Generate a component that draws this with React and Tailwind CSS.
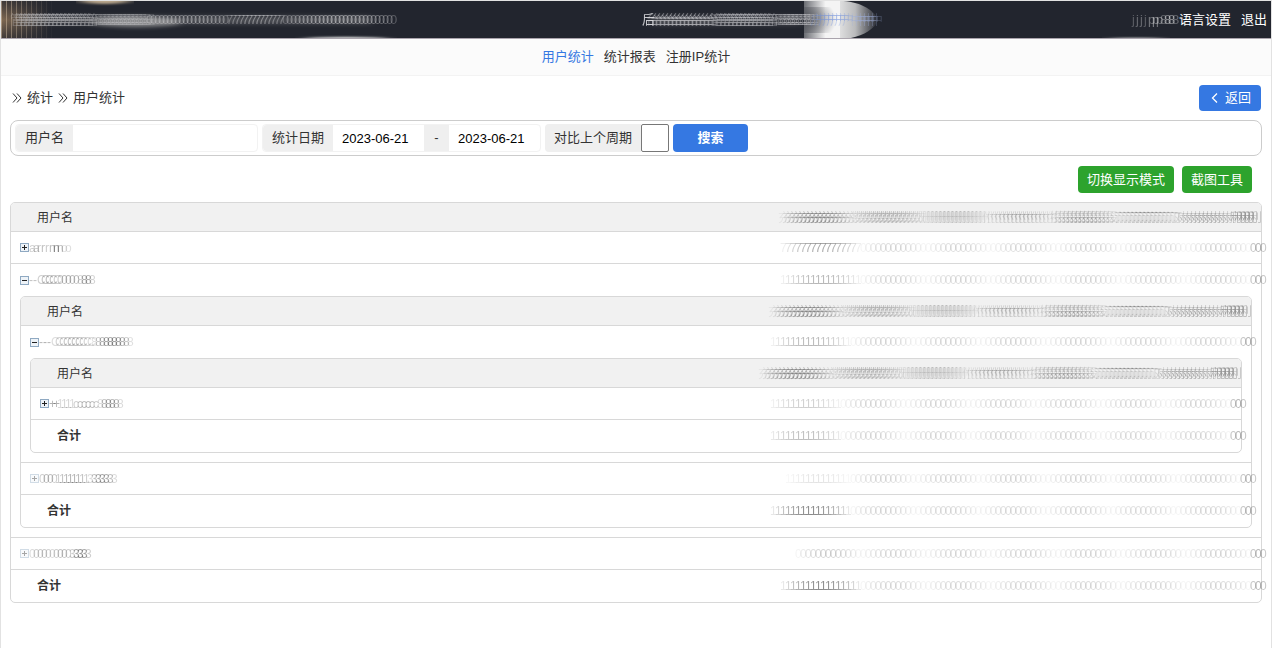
import { useState } from 'react';
import clsx from 'clsx';

// [glyph, copies, opacity at the ends, opacity in the middle]
const HEAD_RUNS = [
  ['充', 18, 0.05, 0.3],
  ['数', 17, 0.07, 0.17],
  ['删', 16, 0.06, 0.13],
  ['付', 17, 0.06, 0.17],
  ['投', 15, 0.1, 0.2],
  ['订', 16, 0.12, 0.22],
  ['对', 14, 0.14, 0.22],
  ['利', 6, 0.2, 0.3],
];

const zeros = (lead) => [
  lead,
  ['0', 13, 0.03, 0.16],
  ['0', 13, 0.03, 0.16],
  ['0', 13, 0.03, 0.16],
  ['0', 13, 0.03, 0.16],
  ['0', 13, 0.03, 0.15],
  ['0', 13, 0.03, 0.16],
  ['0', 3, 0.2, 0.34],
];

const INNER = {
  rows: [
    {
      name: [['+', 2, 0.3, 0.4], ['1', 4, 0.15, 0.2], ['c', 6, 0.2, 0.32], ['8', 6, 0.1, 0.4]],
      data: zeros(['1', 14, 0.05, 0.22]),
    },
  ],
  total: zeros(['1', 14, 0.08, 0.3]),
};

const MIDDLE = {
  rows: [
    {
      open: true,
      name: [['-', 3, 0.3, 0.4], ['C', 10, 0.15, 0.28], ['8', 10, 0.1, 0.45]],
      data: zeros(['1', 16, 0.04, 0.32]),
      child: INNER,
    },
    {
      name: [['0', 4, 0.2, 0.3], ['1', 8, 0.2, 0.35], ['3', 7, 0.1, 0.42]],
      data: zeros(['1', 13, 0.02, 0.12]),
    },
  ],
  total: zeros(['1', 16, 0.06, 0.55]),
};

const OUTER = {
  rows: [
    {
      name: [['a', 2, 0.2, 0.25], ['r', 3, 0.2, 0.3], ['n', 3, 0.2, 0.45], ['o', 2, 0.15, 0.15]],
      data: zeros(['7', 16, 0.04, 0.42]),
    },
    {
      open: true,
      name: [['-', 2, 0.3, 0.3], ['C', 5, 0.2, 0.3], ['0', 5, 0.25, 0.32], ['8', 4, 0.1, 0.4]],
      data: zeros(['1', 16, 0.04, 0.34]),
      child: MIDDLE,
    },
    {
      name: [['0', 6, 0.15, 0.25], ['0', 4, 0.2, 0.28], ['3', 5, 0.12, 0.5]],
      data: zeros(['0', 13, 0.03, 0.2]),
    },
  ],
  total: zeros(['1', 16, 0.06, 0.55]),
};

function Trail({ runs, step = 'w-[4px]', className }) {
  return (
    <div className={clsx('flex h-4 leading-4 whitespace-nowrap select-none', className)}>
      {runs.map(([glyph, count, low, high], r) =>
        Array.from({ length: count }, (_, i) => (
          <span
            key={`${r}-${i}`}
            className={clsx('shrink-0', step)}
            style={{ opacity: low + (high - low) * Math.sin((Math.PI * (i + 0.5)) / count) }}
          >
            {glyph}
          </span>
        ))
      )}
    </div>
  );
}

function Toggle({ open, onClick, faint }) {
  return (
    <button
      type="button"
      aria-label={open ? '收起' : '展开'}
      onClick={onClick}
      className={clsx('shrink-0', faint && 'opacity-40')}
    >
      <svg width="9" height="9" viewBox="0 0 9 9" shapeRendering="crispEdges">
        <rect x="0.5" y="0.5" width="8" height="8" fill="#eef3f8" stroke="#8fa9c2" />
        <path d={open ? 'M2 4.5h5' : 'M2 4.5h5M4.5 2v5'} stroke="#222" />
      </svg>
    </button>
  );
}

function DataCell({ runs, className }) {
  return (
    <td className={className}>
      <Trail runs={runs} step="w-[5px]" className="-mr-1 justify-end" />
    </td>
  );
}

function Row({ row, faint }) {
  const [open, setOpen] = useState(Boolean(row.open));
  const height = row.child ? 'h-8' : 'h-[31px]';
  return (
    <>
      <tr>
        <td className={clsx('px-[9px]', height)}>
          <div className="flex items-center">
            <Toggle open={open} faint={faint} onClick={() => setOpen(!open)} />
            <Trail runs={row.name} />
          </div>
        </td>
        <DataCell runs={row.data} className={height} />
      </tr>
      {open && row.child && (
        <tr>
          <td colSpan={2} className="px-[9px] pb-[9px]">
            <StatTable table={row.child} />
          </td>
        </tr>
      )}
      <tr>
        <td colSpan={2} className="h-px bg-[#d8d8d8]"></td>
      </tr>
    </>
  );
}

function StatTable({ table }) {
  return (
    <div className="rounded-[5px] border border-[#d8d8d8]">
      <table className="w-full border-separate border-spacing-0 text-xs text-[#333]">
        <thead>
          <tr className="bg-[#f1f1f1]">
            <th className="h-[29px] rounded-tl border-b border-[#d8d8d8] pt-[2px] pl-[26px] text-left font-normal">
              用户名
            </th>
            <th className="h-[29px] w-[500px] rounded-tr border-b border-[#d8d8d8] pt-[2px] font-normal">
              <Trail runs={HEAD_RUNS} className="mr-[7px] justify-end" />
            </th>
          </tr>
        </thead>
        <tbody>
          {table.rows.map((row, i) => (
            <Row key={i} row={row} faint={i > 0 && !row.child} />
          ))}
          <tr>
            <td className="h-8 pl-[26px] font-bold">合计</td>
            <DataCell runs={table.total} className="h-8" />
          </tr>
        </tbody>
      </table>
    </div>
  );
}

function Chevrons() {
  return (
    <svg width="10" height="10" viewBox="0 0 10 10" fill="none" stroke="#333" strokeWidth="1">
      <path d="M1 0.5 5 5 1 9.5M5 0.5 9 5 5 9.5" />
    </svg>
  );
}

function HeaderArt() {
  return (
    <svg aria-hidden="true" className="absolute inset-0 h-full w-full" fill="none">
      <defs>
        <linearGradient id="tan">
          <stop offset="0" stopColor="#a98762" />
          <stop offset="1" stopColor="#a98762" stopOpacity="0" />
        </linearGradient>
        <linearGradient id="tanEdge" x2="0" y2="1">
          <stop offset="0" stopColor="#22252e" />
          <stop offset="0.5" stopColor="#22252e" stopOpacity="0" />
          <stop offset="1" stopColor="#22252e" />
        </linearGradient>
        <linearGradient id="flareIn">
          <stop offset="0" stopColor="#f4f4f4" stopOpacity="0.35" />
          <stop offset="0.6" stopColor="#f4f4f4" />
        </linearGradient>
        <linearGradient id="flareOut">
          <stop offset="0" stopColor="#e8e8e8" stopOpacity="0.95" />
          <stop offset="0.4" stopColor="#e0e0e0" stopOpacity="0.8" />
          <stop offset="1" stopColor="#ddd" stopOpacity="0" />
        </linearGradient>
        <radialGradient id="flareCore" cx="0" cy="0.5" r="0.9">
          <stop offset="0" stopColor="#55575e" />
          <stop offset="1" stopColor="#55575e" stopOpacity="0" />
        </radialGradient>
        <pattern id="slats" width="5" height="38" patternUnits="userSpaceOnUse">
          <path d="M0.5 0v38" stroke="#ddc8ad" strokeOpacity="0.5" />
        </pattern>
        <linearGradient id="slatFade">
          <stop offset="0" stopColor="#fff" />
          <stop offset="1" stopColor="#000" />
        </linearGradient>
        <mask id="slatMask">
          <rect width="55" height="38" fill="url(#slatFade)" />
        </mask>
        <filter id="soft" x="-30%" y="-60%" width="160%" height="220%">
          <feGaussianBlur stdDeviation="4 2" />
        </filter>
        <filter id="thin" x="-10%" y="-100%" width="120%" height="300%">
          <feGaussianBlur stdDeviation="7 1" />
        </filter>
      </defs>
      <rect width="50" height="38" fill="url(#tan)" fillOpacity="0.7" />
      <rect width="50" height="38" fill="url(#tanEdge)" fillOpacity="0.7" />
      <rect width="55" height="38" fill="url(#slats)" mask="url(#slatMask)" />
      <ellipse cx="104" cy="0" rx="24" ry="3" fill="#b7a58b" filter="url(#thin)" />
      <ellipse cx="345" cy="38" rx="42" ry="2" fill="#eee" filter="url(#thin)" />
      <ellipse cx="1135" cy="38" rx="28" ry="1" fill="#eee" filter="url(#thin)" />
      <path d="M20 15h350v8H20z" fill="#999" fillOpacity="0.35" filter="url(#soft)" />
      <ellipse cx="135" cy="21" rx="45" ry="5" fill="#aaa" fillOpacity="0.7" filter="url(#soft)" />
      <path d="M650 15h150v9H650z" fill="#999" fillOpacity="0.3" filter="url(#soft)" />
      <path d="M803 0h36v38h-36z" fill="url(#flareIn)" />
      <path d="M803 6h36v26h-36z" fill="url(#flareCore)" />
      <path d="M839 0c18 0 34 8 38 19-4 11-20 19-38 19z" fill="url(#flareOut)" />
    </svg>
  );
}

function TopBar() {
  return (
    <header className="relative grid h-[38px] grid-cols-2 items-center border-b border-[#aaa4ad] bg-[#22252e] text-[13px] text-white">
      <HeaderArt />
      <Trail
        runs={[
          ['管', 20, 0.3, 0.42],
          ['理', 14, 0.2, 0.3],
          ['0', 20, 0.35, 0.45],
          ['7', 14, 0.35, 0.5],
          ['0', 28, 0.3, 0.55],
        ]}
        className="relative ml-[9px] text-[#c9c9cc]"
      />
      <div className="relative flex items-center">
        <Trail
          runs={[['后', 1, 0.9, 0.9], ['台', 16, 0.35, 0.42], ['管', 15, 0.3, 0.4], ['理', 10, 0.2, 0.35]]}
          className="ml-[6px] text-[#dcdce0]"
        />
        <Trail runs={[['户', 9, 0.2, 0.34]]} className="text-[#6f8fdc]" />
        <Trail runs={[['中', 7, 0.2, 0.34]]} className="text-[#9fb0dc]" />
        <nav className="ml-auto flex items-center pr-1">
          <Trail runs={[['j', 4, 0.2, 0.3], ['p', 3, 0.3, 0.4], ['8', 4, 0.2, 0.45]]} />
          <a href="#language" className="ml-[3px]">语言设置</a>
          <a href="#logout" className="ml-[10px]">退出</a>
        </nav>
      </div>
    </header>
  );
}

export default function App() {
  const [filter, setFilter] = useState({
    username: '',
    from: '2023-06-21',
    to: '2023-06-21',
    compare: false,
  });

  const change = (e) => {
    const { name, type, checked, value } = e.target;
    setFilter({ ...filter, [name]: type === 'checkbox' ? checked : value });
  };

  return (
    <div className="min-h-screen border-x border-t border-[#e2e2e2] bg-white font-['Liberation_Sans','Noto_Sans_CJK_SC',sans-serif] text-[13px] text-[#333]">
      <TopBar />
      <nav className="flex h-[37px] items-center justify-center gap-[10px] border-b border-[#f3f3f3] bg-[#fbfbfb]">
        <a href="#users" className="text-[#3578e2]">用户统计</a>
        <a href="#reports">统计报表</a>
        <a href="#ip">注册IP统计</a>
      </nav>

      <main className="px-[9px] pt-2">
        <div className="flex h-[27px] items-center justify-between pr-px">
          <div className="flex items-center gap-[5px] pl-[2px]">
            <Chevrons />
            <a href="#stats">统计</a>
            <Chevrons />
            <span>用户统计</span>
          </div>
          <button type="button" className="flex h-[26px] items-center gap-[6px] rounded bg-[#3578e2] pr-[10px] pl-3 text-white">
            <svg width="8" height="10" viewBox="0 0 8 10" fill="none" stroke="#fff" strokeWidth="1.3">
              <path d="M6 0.5 1.5 5 6 9.5" />
            </svg>
            返回
          </button>
        </div>

        <form
          onSubmit={(e) => e.preventDefault()}
          className="mt-[9px] flex items-center gap-1 rounded-lg border border-[#ccc] px-1 py-[3px]"
        >
          <div className="flex h-7 items-center rounded border border-[#f2f2f2]">
            <label htmlFor="username" className="flex h-full items-center rounded-l bg-[#efefef] px-[9px]">
              用户名
            </label>
            <input
              id="username"
              name="username"
              value={filter.username}
              onChange={change}
              className="h-full w-[184px] rounded-r px-[9px] outline-none"
            />
          </div>
          <div className="flex h-7 items-center rounded border border-[#f2f2f2]">
            <label htmlFor="from" className="flex h-full items-center rounded-l bg-[#efefef] px-[9px]">
              统计日期
            </label>
            <input
              id="from"
              name="from"
              value={filter.from}
              onChange={change}
              className="h-full w-[91px] px-[9px] text-black outline-none"
            />
            <label htmlFor="to" className="flex h-full w-[25px] items-center justify-center bg-[#efefef]">
              -
            </label>
            <input
              id="to"
              name="to"
              value={filter.to}
              onChange={change}
              className="h-full w-[91px] rounded-r px-[9px] text-black outline-none"
            />
          </div>
          <div className="flex h-7 items-center">
            <label htmlFor="compare" className="flex h-full items-center rounded-l bg-[#efefef] px-[9px]">
              对比上个周期
            </label>
            <input
              id="compare"
              name="compare"
              type="checkbox"
              checked={filter.compare}
              onChange={change}
              className="size-7 appearance-none rounded-[2px] border border-[#777] bg-white checked:bg-[#3578e2]"
            />
          </div>
          <button type="submit" className="h-7 w-[75px] rounded bg-[#3578e2] font-bold text-white">
            搜索
          </button>
        </form>

        <div className="mt-[10px] mb-[9px] flex justify-end gap-2 pr-[10px]">
          <button type="button" className="h-[27px] rounded bg-[#2da32d] px-[9px] text-white">
            切换显示模式
          </button>
          <button type="button" className="h-[27px] rounded bg-[#2da32d] px-[9px] text-white">
            截图工具
          </button>
        </div>

        <StatTable table={OUTER} />
      </main>
    </div>
  );
}
